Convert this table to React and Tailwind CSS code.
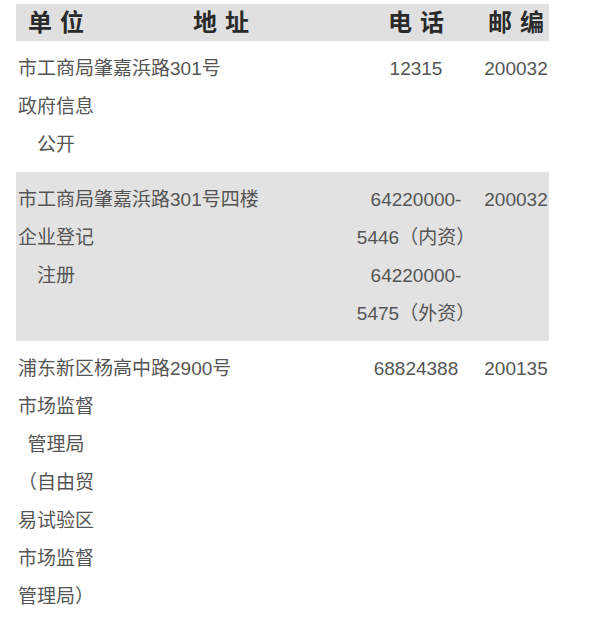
import React from 'react'

const rows = [
  {
    address: '市工商局肇嘉浜路301号',
    unit: ['政府信息', '公开'],
    phones: ['12315'],
    zip: '200032',
    shaded: false,
  },
  {
    address: '市工商局肇嘉浜路301号四楼',
    unit: ['企业登记', '注册'],
    phones: ['64220000-', '5446（内资）', '64220000-', '5475（外资）'],
    zip: '200032',
    shaded: true,
  },
  {
    address: '浦东新区杨高中路2900号',
    unit: ['市场监督', '管理局', '（自由贸', '易试验区', '市场监督', '管理局）'],
    phones: ['68824388'],
    zip: '200135',
    shaded: false,
  },
]

const font = { fontFamily: '"Liberation Sans", "Noto Sans CJK SC", sans-serif' }

const Head = ({ children, className }) => (
  <div className={`${className} text-center`}>
    <span className="tracking-[8px] mr-[-8px]">{children}</span>
  </div>
)

const Row = ({ address, unit, phones, zip, shaded }) => (
  <div className={`flex pl-[2px] pt-[9px] pb-[8px] leading-[38px] ${shaded ? 'bg-[#e2e2e2]' : ''}`}>
    <div className="w-[330px] flex flex-col">
      <div className="whitespace-nowrap">{address}</div>
      {unit.map((u, i) => (
        <div key={i} className="w-[76px] text-center whitespace-nowrap">{u}</div>
      ))}
    </div>
    <div className="w-[136px] flex flex-col text-center">
      {phones.map((p, i) => (
        <div key={i} className="whitespace-nowrap">{p}</div>
      ))}
    </div>
    <div className="w-[64px] text-center">{zip}</div>
  </div>
)

const App = () => {
  return (
    <div className="w-[600px] h-[623px] bg-white pt-[4px] pl-[16px]" style={font}>
      <div className="w-[533px]">
        <div className="flex items-center h-[37px] pl-[2px] bg-[#e0e0e0] text-[24px] font-bold text-[#2a2a2a]">
          <Head className="w-[76px]">单位</Head>
          <Head className="w-[254px]">地址</Head>
          <Head className="w-[136px]">电话</Head>
          <Head className="w-[64px]">邮编</Head>
        </div>
        <div className="text-[19px] text-[#555555]">
          {rows.map((r, i) => (
            <Row key={i} {...r} />
          ))}
        </div>
      </div>
    </div>
  )
}

export default App
